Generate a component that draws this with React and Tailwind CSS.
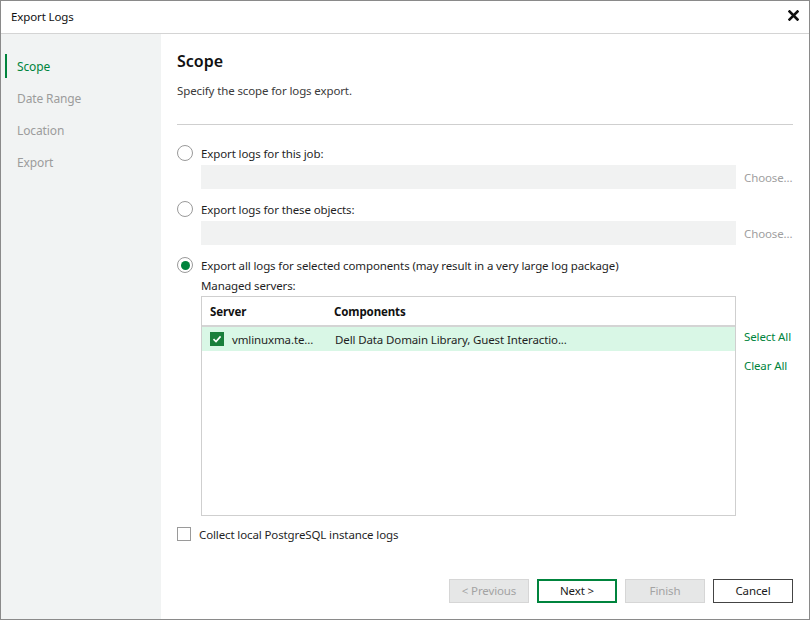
import React from "react";

function Radio({ checked }) {
  return (
    <span className="w-4 h-4 rounded-full border border-[#9a9a9a] bg-white flex items-center justify-center shrink-0">
      {checked && <span className="w-[9px] h-[9px] rounded-full bg-[#00843d]" />}
    </span>
  );
}

function Button({ children, variant }) {
  const cls =
    variant === "primary"
      ? "border-2 border-[#00843d] text-[#1a1a1a] bg-white"
      : variant === "disabled"
      ? "border border-[#d6d6d6] bg-[#e6e7e7] text-[#a3a3a3]"
      : "border border-[#444444] bg-white text-[#1a1a1a]";
  return (
    <div className={`w-[80px] h-[24px] flex items-center justify-center ${cls}`}>
      {children}
    </div>
  );
}

export default function App() {
  return (
    <div
      className="w-[810px] h-[620px] border border-[#8a8a8a] bg-white flex flex-col text-[#1f1f1f] text-[11.5px] tracking-[-0.12px] leading-4"
      style={{ fontFamily: '"Noto Sans", "Open Sans", sans-serif' }}
    >
      {/* Title bar */}
      <div className="h-[33px] shrink-0 border-b border-[#d4d4d4] flex items-center justify-between pl-[10px] pr-[10px]">
        <span className="text-[#111]">Export Logs</span>
        <svg width="11" height="11" viewBox="0 0 11 11" className="mb-[3px]">
          <path d="M1.5 1.5 L9.5 9.5 M9.5 1.5 L1.5 9.5" stroke="#111" strokeWidth="2.6" strokeLinecap="square" />
        </svg>
      </div>

      <div className="flex flex-1 min-h-0">
        {/* Sidebar */}
        <div className="w-[160px] shrink-0 bg-[#f1f3f3] pt-4 flex flex-col">
          {[
            ["Scope", true],
            ["Date Range", false],
            ["Location", false],
            ["Export", false],
          ].map(([label, active]) => (
            <div key={label} className="h-8 flex items-center pl-1">
              <span className={`w-[2px] h-6 ${active ? "bg-[#00843d]" : "bg-transparent"}`} />
              <span className={`ml-[10px] pt-px text-[12px] ${active ? "text-[#00843d]" : "text-[#9c9c9c]"}`}>
                {label}
              </span>
            </div>
          ))}
        </div>

        {/* Main */}
        <div className="flex-1 flex flex-col pl-4 pr-4 pb-4">
          <div className="mt-[15px] h-6 leading-6 text-[16px] tracking-normal font-semibold text-[#111]">Scope</div>
          <div className="mt-[10px] h-4 text-[#3a3a3a]">Specify the scope for logs export.</div>
          <div className="mt-[25px] h-px bg-[#cfcfcf]" />

          <div className="mt-[18px] h-5 flex items-center gap-2">
            <Radio />
            <span className="pt-px">Export logs for this job:</span>
          </div>
          <div className="mt-[2px] h-6 flex items-center gap-2 pl-6">
            <div className="flex-1 h-6 bg-[#f1f2f2]" />
            <span className="w-[49px] text-[#a0a0a0] whitespace-nowrap pt-px">Choose...</span>
          </div>

          <div className="mt-[10px] h-5 flex items-center gap-2">
            <Radio />
            <span className="pt-px">Export logs for these objects:</span>
          </div>
          <div className="mt-[2px] h-6 flex items-center gap-2 pl-6">
            <div className="flex-1 h-6 bg-[#f1f2f2]" />
            <span className="w-[49px] text-[#a0a0a0] whitespace-nowrap pt-px">Choose...</span>
          </div>

          <div className="mt-[10px] h-5 flex items-center gap-2">
            <Radio checked />
            <span className="pt-px">Export all logs for selected components (may result in a very large log package)</span>
          </div>
          <div className="mt-[3px] h-4 pl-6">Managed servers:</div>

          <div className="mt-[2px] flex gap-2 pl-6">
            <div className="flex-1 h-[220px] border border-[#cfcfcf] flex flex-col">
              <div className="h-[30px] flex items-center border-b-2 border-[#d4d4d4] font-bold text-[#111] pt-px">
                <span className="w-[132px] pl-2">Server</span>
                <span>Components</span>
              </div>
              <div className="h-6 bg-[#d9f7e6] flex items-center">
                <div className="w-[132px] pl-2 flex items-center gap-2">
                  <span className="w-[14px] h-[14px] bg-[#1a7f3c] flex items-center justify-center">
                    <svg width="10" height="10" viewBox="0 0 10 10">
                      <path d="M1.5 5.2 L4 7.6 L8.6 2.4" stroke="#fff" strokeWidth="1.6" fill="none" />
                    </svg>
                  </span>
                  <span className="whitespace-nowrap pt-px">vmlinuxma.te...</span>
                </div>
                <span className="pl-[1px] whitespace-nowrap pt-px">Dell Data Domain Library, Guest Interactio...</span>
              </div>
            </div>
            <div className="w-[49px] flex flex-col pt-8 text-[#00843d] whitespace-nowrap">
              <span className="h-4 pt-px">Select All</span>
              <span className="h-4 mt-[13px] pt-px">Clear All</span>
            </div>
          </div>

          <div className="mt-2 h-5 flex items-center gap-2">
            <span className="w-[14px] h-[14px] border border-[#9a9a9a] bg-white" />
            <span className="pt-px">Collect local PostgreSQL instance logs</span>
          </div>

          <div className="flex-1" />

          <div className="flex justify-end gap-2">
            <Button variant="disabled">&lt; Previous</Button>
            <Button variant="primary">Next &gt;</Button>
            <Button variant="disabled">Finish</Button>
            <Button>Cancel</Button>
          </div>
        </div>
      </div>
    </div>
  );
}
